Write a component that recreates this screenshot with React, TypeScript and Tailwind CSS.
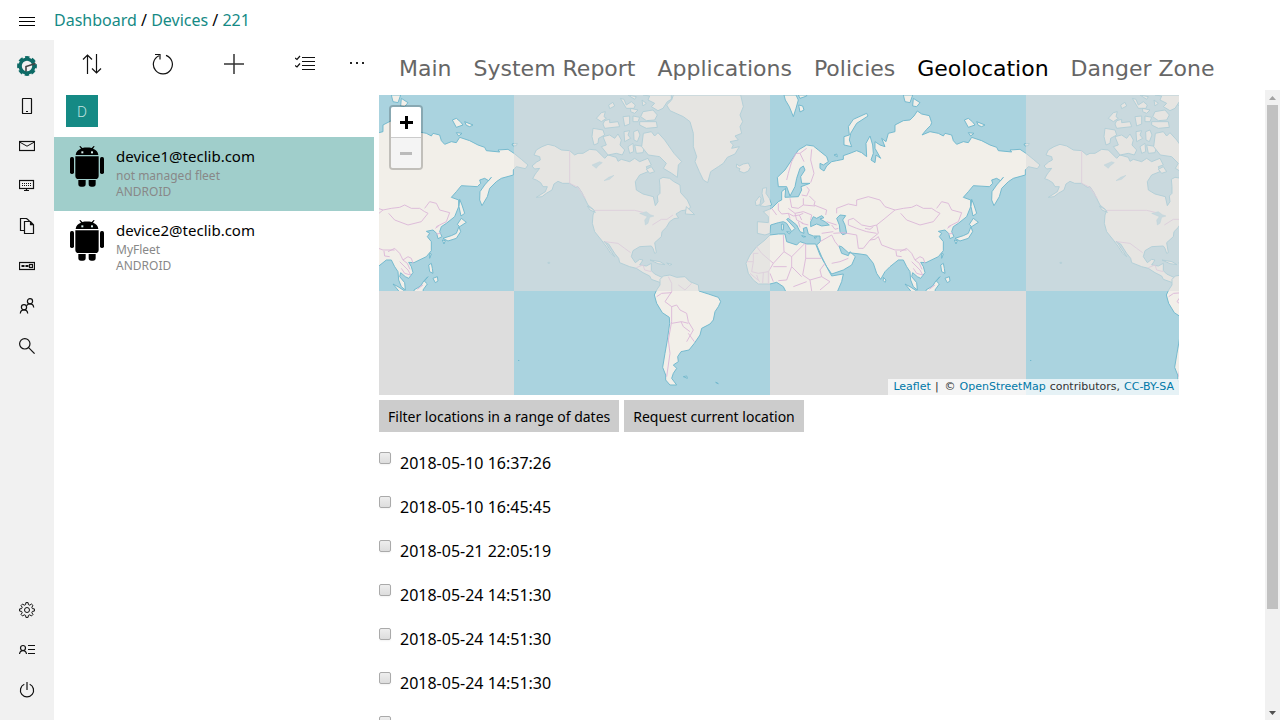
import type { ReactNode } from "react";

const LAND = "fill-[#f2efe9] stroke-[#6fb7cc]";

function Svg({ size, box, children }: { size: string; box: string; children: ReactNode }) {
  return (
    <svg className={size} viewBox={box} fill="none" stroke="#111" strokeWidth="1.2" aria-hidden="true">
      {children}
    </svg>
  );
}

const sideTop: { label: string; icon: ReactNode }[] = [
  {
    label: "Dashboard",
    icon: (
      <Svg size="size-5" box="0 0 20 20">
        <circle cx="10" cy="10" r="8.7" stroke="#0d6a66" strokeWidth="2.4" strokeDasharray="4.400 2.433" strokeDashoffset="2.200" />
        <circle cx="10" cy="10" r="6.900" stroke="#0d6a66" strokeWidth="3.400" />
        <path d="M9 15.500V10.600L18.500 7.400" stroke="#444" strokeWidth="1.600" />
      </Svg>
    ),
  },
  {
    label: "Devices",
    icon: (
      <Svg size="size-4" box="0 0 16 16">
        <rect x="3.5" y=".5" width="9" height="15" rx=".6" />
        <path d="M7 13.5h2" />
      </Svg>
    ),
  },
  {
    label: "Invitations",
    icon: (
      <Svg size="size-4" box="0 0 16 16">
        <rect x=".5" y="3.5" width="15" height="9" />
        <path d="M.5 4l7.5 4.200L15.500 4" strokeWidth="1" />
      </Svg>
    ),
  },
  {
    label: "Fleets",
    icon: (
      <Svg size="size-4" box="0 0 16 16">
        <rect x=".5" y="2.500" width="14" height="8" />
        <path d="M3 5.500h10M3 7.500h10" strokeDasharray="1 1" strokeWidth="1" />
        <path d="M7.500 10.500v2M5 12.500h5" />
      </Svg>
    ),
  },
  {
    label: "Files",
    icon: (
      <Svg size="size-4" box="0 0 16 16">
        <path d="M5 12.500H1.500V.500h6l3 2.500" />
        <path d="M5.500 3.500h6l3 3.200v8.800h-9z M11.500 3.500v3.200h3" />
      </Svg>
    ),
  },
  {
    label: "Applications",
    icon: (
      <Svg size="size-4" box="0 0 16 16">
        <rect x=".5" y="4.500" width="15" height="7" />
        <path d="M2.500 8h3M6.500 8h3" strokeWidth="2" />
        <rect x="10.500" y="6.500" width="3" height="3" />
      </Svg>
    ),
  },
  {
    label: "Users",
    icon: (
      <Svg size="size-4" box="0 0 16 16">
        <circle cx="11" cy="3.300" r="2.600" />
        <circle cx="5" cy="9.300" r="2.600" />
        <path d="M1.300 15.500c.2-2.200 1.700-3.600 3.700-3.600s3.500 1.400 3.700 3.600M7.600 7.600C8.300 6.600 9.500 5.900 11 5.900c2 0 3.500 1.400 3.700 3.600" />
      </Svg>
    ),
  },
  {
    label: "Search",
    icon: (
      <Svg size="size-4" box="0 0 16 16">
        <circle cx="5.800" cy="5.800" r="5.200" />
        <path d="M9.600 9.600l6 6" />
      </Svg>
    ),
  },
];

const sideBottom: { label: string; icon: ReactNode }[] = [
  {
    label: "Settings",
    icon: (
      <Svg size="size-4" box="0 0 16 16">
        <path
          strokeLinejoin="round"
          strokeWidth="1"
          d="M6.600 2.600L6.900.600h2.200l.3 2 1.400.6L12.400 2 14 3.600l-1.200 1.600.6 1.400 2 .3v2.200l-2 .3-.6 1.400L14 12.400 12.400 14l-1.600-1.200-1.400.6-.3 2H6.900l-.3-2-1.400-.6L3.600 14 2 12.400l1.200-1.600-.6-1.400-2-.3V6.900l2-.3.6-1.400L2 3.600 3.600 2l1.600 1.200z"
        />
        <circle cx="8" cy="8" r="2.500" strokeWidth="1" />
      </Svg>
    ),
  },
  {
    label: "Account",
    icon: (
      <Svg size="size-4" box="0 0 16 16">
        <circle cx="4" cy="6" r="2.500" />
        <path d="M.5 12C.8 9.900 2.200 8.600 4 8.600s3.200 1.300 3.500 3.400M9 3.500h7M9 7.500h7M9 11.500h7" />
      </Svg>
    ),
  },
  {
    label: "Log out",
    icon: (
      <Svg size="size-4" box="0 0 16 16">
        <path d="M5.300 2.300a6.600 6.600 0 1 0 5.400 0" />
        <path d="M8 0v8" />
      </Svg>
    ),
  },
];

const devices = [
  { name: "device1@teclib.com", fleet: "not managed fleet", active: true },
  { name: "device2@teclib.com", fleet: "MyFleet", active: false },
];

const tabs = ["Main", "System Report", "Applications", "Policies", "Geolocation", "Danger Zone"];

const locations = [
  "2018-05-10 16:37:26",
  "2018-05-10 16:45:45",
  "2018-05-21 22:05:19",
  "2018-05-24 14:51:30",
  "2018-05-24 14:51:30",
  "2018-05-24 14:51:30",
  "2018-05-24 14:51:30",
];

function Android() {
  return (
    <svg className="h-[41px] w-[34px] shrink-0" viewBox="0 0 102 123" aria-hidden="true">
      <path d="M17 27C18 17 24 11 33 8L28 1l3-1 6 6c9-2 19-2 28 0l6-6 3 1-5 7c9 3 15 9 16 19z" />
      <path d="M16 31h70v58q0 10-10 10H26q-10 0-10-10z" />
      <path d="M25 102h22v12q0 8-8 8h-6q-8 0-8-8zM56 102h21v12q0 8-8 8h-5q-8 0-8-8z" />
      <rect y="33" width="12" height="51" rx="5" />
      <rect x="90" y="33" width="12" height="51" rx="5" />
      <rect x="34" y="16" width="6" height="6" fill="#d5ecea" />
      <rect x="63" y="16" width="6" height="6" fill="#d5ecea" />
    </svg>
  );
}

function World() {
  return (
    <g strokeWidth="2.8" strokeLinejoin="round">
      <g transform="translate(-378 -15)" className={LAND}>
        <path d="M480 163L462 170 445 180 438 195 455 200 457 210 446 216 432 228 440 237 455 235 445 248 440 255 434 266 445 270 458 278 465 290 478 290 472 305 445 322 462 320 475 310 492 300 498 282 510 274 524 280 545 280 562 292 570 290 582 308 590 325 600 345 620 362 615 375 613 400 620 425 640 450 655 470 668 490 680 500 665 478 655 462 648 454 662 462 680 490 692 505 695 518 725 530 745 535 765 548 785 558 790 568 815 577 828 565 800 552 790 542 790 520 775 528 755 525 765 510 755 508 742 518 730 500 735 482 755 470 790 468 795 475 800 490 805 488 800 458 820 440 822 425 835 412 845 395 858 386 872 384 864 372 880 362 896 360 908 352 898 330 878 308 876 285 856 274 845 265 825 262 814 268 816 290 816 310 808 318 810 335 802 347 796 320 765 312 745 300 742 275 755 255 780 245 775 230 790 225 780 205 755 215 740 205 725 215 700 208 690 214 685 202 660 195 650 205 625 180 605 178 585 190 570 190 560 195 545 182 520 180 500 168z" />
        <path d="M615 115L645 120 650 135 632 145 630 160 618 165 612 140zM645 140L665 135 680 145 690 132 700 150 696 165 710 180 703 195 685 190 660 195 640 170 655 165z" />
        <path d="M625 85L640 68 652 65 648 80 655 85 640 95zM650 92L665 88 665 98 690 95 695 110 650 115 645 102zM662 45L675 37 680 48 665 56zM697 25L708 28 715 45 730 35 742 45 738 55 715 55zM705 80L725 78 725 102 710 108zM728 55L750 60 740 70 728 65zM735 78L755 82 750 95 735 95zM708 125L725 122 720 135 728 145 710 155zM737 125L750 120 756 135 748 155 738 150zM720 170L735 160 737 185 725 190zM740 165L770 170 765 188 745 190zM755 95L805 95 808 112 775 115 755 105zM765 65L795 60 808 75 800 90 775 92 758 80z" />
        <path d="M765 15L785 18 780 30 800 40 790 50 810 62 825 55 838 35 850 28 850 15zM720 15L745 20 740 28zM762 30L775 40 765 48z" />
        <path d="M766 130L790 125 800 138 810 128 830 150 858 190 881 215 871 225 868 262 851 250 826 235 835 220 815 200 781 195 761 170zM775 238L790 230 800 245 785 250zM786 510L816 515 831 524 810 521zM836 519L852 523 845 526zM895 350L920 374 892 372zM598 348L615 358 622 367 606 360zM480 517h5v3h-5z" />
        <path d="M612 225L635 215 643 218 630 228 625 235zM648 272L662 262 678 256 665 268zM755 370L775 365 787 374 798 378 785 382 780 400 772 405 770 390 778 380z" fill="#aad3df" strokeWidth="1" />
      </g>
      <g transform="translate(378 -15)" className={LAND}>
        <path d="M100 15L95 30 80 45 90 62 130 80 150 95 160 130 160 170 170 200 165 215 178 245 190 270 203 278 212 245 235 230 250 220 262 202 285 192 298 170 275 175 280 165 270 155 295 150 285 138 305 130 300 110 308 95 300 75 310 50 302 15z" />
        <path d="M290 222L298 228 310 222 325 219 331 232 325 243 312 249 297 243 300 236 289 232zM368 295L380 293 378 310 388 325 395 345 375 350 360 347 372 335 366 310zM346 335L358 319 363 325 360 344 348 347zM432 15L436 30 448 50 460 80 468 55 475 30 468 15zM476 45L488 48 492 60 480 66zM475 15L480 25 500 18 500 15zM612 165L612 140 628 135 625 110 640 88 680 70 684 78 650 100 632 130 628 150 635 170z" />
        <path d="M475 180L500 165 520 168 535 180 560 200 565 215 550 225 540 220 540 235 552 243 560 228 575 215 590 212 610 208 610 197 630 190 650 182 665 188 680 200 678 160 690 138 698 165 700 190 693 210 705 218 708 195 722 205 705 175 705 155 720 165 735 170 725 145 738 155 745 130 765 125 765 105 790 92 810 90 822 78 832 63 845 72 868 77 875 98 872 106 860 118 846 135 870 125 895 130 910 138 915 130 935 135 940 152 950 163 970 155 985 158 995 142 1025 152 1050 165 1070 172 1075 182 1115 186 1110 180 1140 178 1158 190 1180 208 1200 225 1192 236 1165 230 1156 240 1156 255 1120 265 1105 275 1085 295 1078 320 1062 347 1055 330 1056 305 1070 285 1090 262 1082 272 1070 265 1055 270 1058 280 1048 290 1000 287 985 305 970 322 992 330 992 350 980 380 955 400 940 410 935 425 942 440 930 446 926 430 915 420 895 424 905 430 898 440 910 455 910 482 895 500 870 512 858 518 842 517 850 530 855 548 842 565 832 560 818 548 815 560 830 578 832 600 820 590 812 570 810 545 800 530 790 510 775 510 750 530 735 545 722 568 710 550 700 520 680 495 660 492 625 488 605 470 597 468 605 490 625 497 630 485 646 500 635 525 610 540 575 552 560 530 545 500 530 465 541 455 540 438 520 438 505 432 500 412 490 415 492 430 480 425 470 405 445 385 440 388 465 415 455 425 440 400 430 395 415 398 392 405 390 430 375 435 352 430 352 395 385 398 385 380 370 365 395 355 415 335 425 330 425 305 437 295 435 322 475 320 485 300 483 290 510 280 485 280 482 260 495 240 490 228 480 235 470 265 465 290 450 318 440 290 415 290 412 262 435 240 455 210z" />
        <path d="M390 435L375 450 350 470 330 495 318 520 325 550 340 570 355 582 390 582 410 577 430 590 440 610 590 610 605 575 610 552 575 558 565 540 540 495 527 462 500 462 480 455 470 465 440 455 435 432 415 432z" />
        <path d="M730 562L738 570 735 577 730 572zM425 402L431 403 430 420 425 420zM440 425L452 427 448 432zM485 437L497 440 490 441zM522 443L530 440 526 446zM582 195l8-3 2 8z" />
        <path d="M590 385L600 375 617 377 608 390 615 405 620 430 608 434 600 425 598 405zM512 395L520 380 530 385 545 377 552 383 540 387 555 395 568 405 545 408 530 402 512 410z" fill="#aad3df" />
        <g fill="none" stroke="#dcb8d8" strokeWidth="2.8">
          <path d="M500 175L480 190 468 190 455 215 445 250 440 270M480 190L492 215M515 178L512 210 522 250 512 278M485 315L500 318 508 300 500 290M508 318L525 335 522 345 560 360 557 375M450 325L455 352 475 355 490 345 490 325M415 340L415 360 425 372 445 370 450 385M445 355L465 370 490 365 515 375 512 390M465 370L470 390 490 400M445 370L460 378 478 375 485 390M478 375L490 370M475 395L480 412M485 400L505 405M560 395L590 405M395 355L410 375M490 345L525 348M590 370L590 355 625 342 650 347 650 330 685 320 720 330 735 350 765 360M765 360L735 385 710 405 690 410 665 405 640 385 625 390 625 405 650 415 680 425 710 430M675 415L690 418 700 410M580 430L610 428 650 435 655 475 670 475 690 450 705 448 715 440 725 465 765 480 800 480M540 455L575 435 585 455 597 470M575 520L600 515 625 505M545 430L580 425M575 405L585 418 595 415M710 405L715 430 690 450M765 360L790 355 815 352 830 345 850 355 875 355 890 365 900 370 880 395 840 405 800 390 782 370M890 355L905 335 925 340 935 360 965 368 955 395 925 410M780 485L800 475 815 490 825 510 840 500 850 505 855 520M768 483L770 498 785 500M815 515L825 525 840 540 848 555 830 550 820 535M825 510L838 520 846 538" />
          <path d="M430 435L432 485 455 500 495 460M497 462V505H545M455 500L455 530 440 570 415 572M497 505L488 555 510 570 545 560 540 540 555 520M350 470L365 490 400 520 432 485M320 515H340V490H355M340 515L335 545 355 550 385 545 400 520M390 550L400 575M400 530L440 530M510 570L515 603M545 560L570 575 540 600M330 550L360 575M385 545L385 582M455 530L485 560M460 590L500 575M350 555L355 570M370 548L368 580" />
        </g>
      </g>
      <g transform="translate(1158 -15)" className={LAND}>
        <path d="M10 15L15 35 30 38 38 15zM40 25L60 38 50 50 38 48zM193 90L205 85 217 95 225 105 205 112zM230 95L255 105 245 110 235 106zM205 128L222 130 212 138zM372 162L388 160 385 167 375 168zM215 328L222 345 230 370 219 378 213 350zM208 403L220 385 235 397 215 410zM213 410L218 425 205 445 180 453 165 445 190 437 205 430zM163 450L172 452 168 462zM125 490L130 492 125 505zM122 525L130 520 133 535 135 550 125 545zM135 565L148 560 150 573 142 578zM120 560L110 572 112 568zM15 582L30 590 50 603 50 612 38 610zM78 600L98 588 108 572 118 582 105 600 110 615 80 615z" />
        <path d="M142 415L152 408M145 432L158 430M88 598L105 585" fill="none" stroke="#dcb8d8" />
      </g>
      <g transform="translate(-417 555)" className={LAND}>
        <path d="M845 30L855 15 855 -2 865 -12 885 -15 905 -8 930 -10 945 5 970 15 972 33 1000 42 1030 52 1037 65 1030 80 1020 95 1015 120 1005 132 980 145 975 165 958 190 942 210 918 215 908 230 910 245 895 255 905 265 895 280 890 295 905 315 885 315 872 300 872 285 863 262 870 220 877 180 884 130 883 112 862 98 845 70 838 45zM925 290l10-2 2 7zM1022 307l8 4zM430 240l2 3z" />
        <g fill="none" stroke="#dcb8d8" strokeWidth="2.8">
          <path d="M880 -10L890 10 890 35 870 65 890 80 905 75 915 90 935 100 940 125 955 150 935 185M890 80V125L880 180 885 220 875 290M890 130L920 125 940 130M940 160L958 185M845 50L860 40 890 38M910 15L930 30 950 10M918 125L925 140 945 155" />
        </g>
      </g>
      <g transform="translate(-378 -15)" fill="none" stroke="#dcb8d8" strokeWidth="2.8">
        <path d="M545 182V280L570 292 592 325M620 361H740L765 367M793 405L820 388H837L855 375M650 455L690 460 710 475 728 488M745 533L765 525 770 540 790 545" />
      </g>
    </g>
  );
}

const worldOffsets = [-377, 135, 647];

function LocationMap() {
  return (
    <div className="relative h-[300px] w-[800px] max-w-full overflow-hidden bg-[#ddd]">
      <svg className="block h-[300px] w-[800px] max-w-none" viewBox="0 0 800 300" role="img" aria-label="World map">
        <rect width="800" height="300" fill="#aad3df" />
        {worldOffsets.map((x) => (
          <g key={x} transform={`translate(${x} 0) scale(.333333)`}>
            <World />
          </g>
        ))}
        {worldOffsets.map((x) => (
          <g key={x} fill="#ddd">
            <rect x={x} width="256" height="196" fillOpacity=".6" />
            <rect x={x + 256} y="196" width="256" height="104" />
          </g>
        ))}
      </svg>
      <div className="absolute top-[10px] left-[10px] flex flex-col rounded-[4px] border-2 border-black/20 bg-clip-padding">
        <button type="button" aria-label="Zoom in" className="flex h-[31px] w-[30px] items-center justify-center rounded-t-[2px] border-b border-[#ccc] bg-white">
          <svg className="size-[13px]" viewBox="0 0 13 13" aria-hidden="true">
            <path d="M5 0h3v5h5v3H8v5H5V8H0V5h5z" />
          </svg>
        </button>
        <button type="button" aria-label="Zoom out" disabled className="flex h-[30px] w-[30px] items-center justify-center rounded-b-[2px] bg-[#f4f4f4]">
          <svg className="h-[3px] w-3" viewBox="0 0 12 3" aria-hidden="true">
            <path d="M0 0h12v3H0z" fill="#bbb" />
          </svg>
        </button>
      </div>
      <p className="absolute right-0 bottom-0 flex gap-1 bg-white/70 px-[5px] font-['DejaVu_Sans',sans-serif] text-[11px] leading-4 whitespace-nowrap text-[#333]">
        <a href="#leaflet" className="text-[#0078a8]">Leaflet</a>
        <span>|</span>
        <span className="pl-[2px]">©</span>
        <a href="#osm" className="text-[#0078a8]">OpenStreetMap</a>
        <span>contributors,</span>
        <a href="#license" className="text-[#0078a8]">CC-BY-SA</a>
      </p>
    </div>
  );
}

function SideLinks({ items }: { items: typeof sideTop }) {
  return (
    <ul>
      {items.map((item) => (
        <li key={item.label}>
          <a href={`#${item.label}`} aria-label={item.label} className="flex h-10 items-center justify-center">
            {item.icon}
          </a>
        </li>
      ))}
    </ul>
  );
}

export default function App() {
  return (
    <div className="flex h-screen flex-col overflow-hidden bg-white font-['Noto_Sans',sans-serif] text-[15px] text-black">
      <header className="flex h-10 shrink-0 items-center">
        <button type="button" aria-label="Toggle menu" className="flex h-10 w-[54px] items-center justify-center pt-[2px]">
          <svg className="h-[9px] w-4" viewBox="0 0 16 9" stroke="#000" aria-hidden="true">
            <path d="M0 .5h16M0 4.500h16M0 8.500h16" />
          </svg>
        </button>
        <nav aria-label="Breadcrumb" className="text-base">
          <a href="#dashboard" className="text-[#158a85]">Dashboard</a> / <a href="#devices" className="text-[#158a85]">Devices</a> / <a href="#221" className="text-[#158a85]">221</a>
        </nav>
      </header>
      <div className="flex min-h-0 flex-1">
        <nav aria-label="Main" className="flex w-[54px] shrink-0 flex-col justify-between bg-[#f1f1f1] pt-[6px] pb-[10px]">
          <SideLinks items={sideTop} />
          <SideLinks items={sideBottom} />
        </nav>
        <aside className="w-[320px] shrink-0">
          <div className="flex h-12 pl-[2px]">
            <button type="button" aria-label="Sort" className="flex w-[71px] items-center justify-center">
              <Svg size="size-5" box="0 0 20 20">
                <path d="M5.500 20V1M1 5.500L5.500 1l4.500 4.500M14.500 0v19M10 14.500l4.500 4.500 4.500-4.500" />
              </Svg>
            </button>
            <button type="button" aria-label="Refresh" className="flex w-[71px] items-center justify-center">
              <Svg size="size-[22px]" box="0 0 22 22">
                <path d="M14 2.400A9.500 9.500 0 1 1 7 2.700M3 1.500h5v5" />
              </Svg>
            </button>
            <button type="button" aria-label="Add" className="flex w-[71px] items-center justify-center">
              <Svg size="size-5" box="0 0 20 20">
                <path d="M10 0v20M0 10h20" stroke="#333" strokeWidth="1.500" />
              </Svg>
            </button>
            <button type="button" aria-label="Select" className="flex w-[71px] items-center justify-center">
              <Svg size="size-5" box="0 0 20 20">
                <path d="M7 3.500h13M7 7.500h13M7 11.500h13M7 15.500h13M0 4l2 1.500 3-3.500M0 11.500l2 1.500 3-3.500" />
              </Svg>
            </button>
            <button type="button" aria-label="More" className="flex flex-1 items-center justify-center pb-[2px]">
              <svg className="h-4 w-[18px]" viewBox="0 0 18 16" aria-hidden="true">
                <path d="M2 7h2v2H2zM8 7h2v2H8zM14 7h2v2h-2z" fill="#222" />
              </svg>
            </button>
          </div>
          <h2 className="mt-[7px] mb-[10px] ml-3 flex size-8 items-center justify-center bg-[#158a85] text-[14px] font-light text-[#c4e4e2]">D</h2>
          <ul>
            {devices.map((device) => (
              <li key={device.name}>
                <a href={`#${device.name}`} className={`flex h-[74px] gap-3 px-4 pt-[9px] ${device.active ? "bg-[#a0cecb]" : "bg-white"}`}>
                  <Android />
                  <span className="flex flex-col">
                    <span className="mb-[2px] leading-5">{device.name}</span>
                    <span className="text-[12px] leading-4 text-[#888]">{device.fleet}</span>
                    <span className="text-[12px] leading-4 text-[#888]">ANDROID</span>
                  </span>
                </a>
              </li>
            ))}
          </ul>
        </aside>
        <main className="flex min-w-0 flex-1 flex-col pl-[5px]">
          <nav aria-label="Device sections" className="flex h-[50px] shrink-0 gap-[22px] pt-[13px] pl-5 font-['DejaVu_Sans',sans-serif] text-[22px] leading-8 whitespace-nowrap">
            {tabs.map((tab) => (
              <a key={tab} href={`#${tab}`} className={tab === "Geolocation" ? "text-black" : "text-[#666]"}>
                {tab}
              </a>
            ))}
          </nav>
          <div className="flex min-h-0 flex-1">
            <div className="min-w-0 flex-1 overflow-y-auto pt-[5px] [scrollbar-width:none]">
              <LocationMap />
              <div className="mt-[5px] flex gap-[5px] text-[14px]">
                <button type="button" className="h-8 bg-[#ccc] px-[9px]">Filter locations in a range of dates</button>
                <button type="button" className="h-8 bg-[#ccc] px-[9px]">Request current location</button>
              </div>
              <ul className="pt-5">
                {locations.map((location, i) => (
                  <li key={i} className="h-11">
                    <label className="flex items-start gap-[9px]">
                      <input type="checkbox" className="size-3 shrink-0 appearance-none rounded-[2px] border border-[#aaa] bg-linear-to-b from-[#eee] to-[#ddd] shadow-xs checked:bg-[#158a85]" />
                      <span className="text-base leading-[22px]">{location}</span>
                    </label>
                  </li>
                ))}
              </ul>
            </div>
            <div aria-hidden="true" className="flex w-[15px] shrink-0 flex-col items-center bg-[#f1f1f1]">
              <svg className="h-[15px] w-[15px] shrink-0" viewBox="0 0 15 15">
                <path d="M4 10l3.500-4L11 10z" fill="#a3a3a3" />
              </svg>
              <div className="h-[80%] w-[11px] bg-[#c1c1c1]" />
              <svg className="mt-auto h-[15px] w-[15px] shrink-0" viewBox="0 0 15 15">
                <path d="M4 6l3.500 4L11 6z" fill="#505050" />
              </svg>
            </div>
          </div>
        </main>
      </div>
    </div>
  );
}
